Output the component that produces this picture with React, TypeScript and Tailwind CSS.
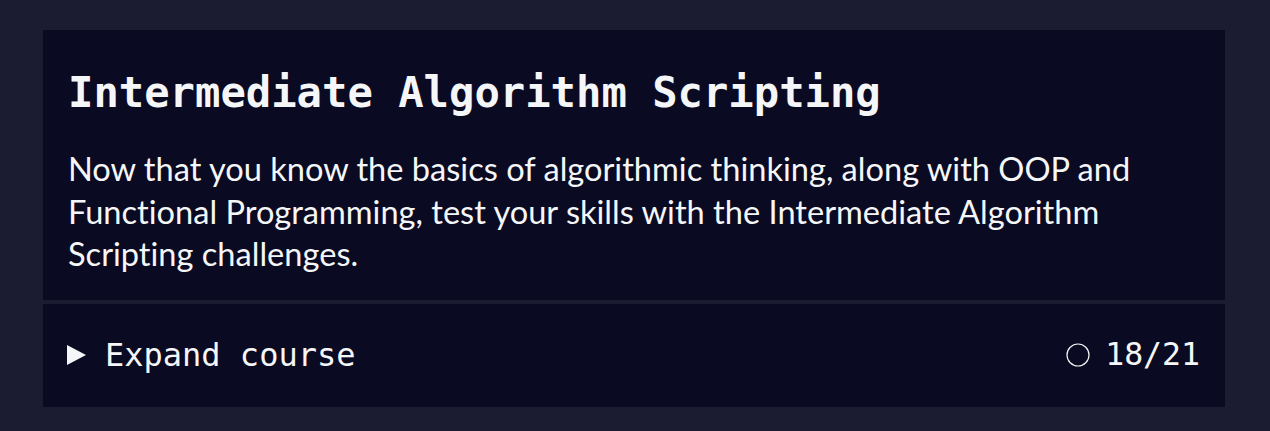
export default function App() {
  return (
    <div className="min-h-[431px] bg-[#1b1b32] pt-[30px] pb-[24px] pl-[43px] pr-[45px]">
      <div className="flex flex-col gap-[4px] bg-[#1b1b32]">
        {/* Header */}
        <div className="bg-[#0a0a23] px-[25px] pt-[38px] pb-[24px]">
          <h2
            className="text-[42.2px] leading-[50px] font-bold text-[#f5f6f7]"
            style={{ fontFamily: '"DejaVu Sans Mono", "Liberation Mono", monospace' }}
          >
            Intermediate Algorithm Scripting
          </h2>
          <p
            className="mt-[30px] text-[32.6px] leading-[42.5px] text-[#f5f6f7] [font-variant-ligatures:none]"
            style={{ fontFamily: 'Lato, "Noto Sans", sans-serif' }}
          >
            Now that you know the basics of algorithmic thinking, along with OOP and Functional
            Programming, test your skills with the Intermediate Algorithm Scripting challenges.
          </p>
        </div>

        {/* Footer */}
        <div
          className="flex h-[103px] items-center justify-between bg-[#0a0a23] pl-[24px] pr-[25px] text-[#f5f6f7]"
          style={{ fontFamily: '"DejaVu Sans Mono", "Liberation Mono", monospace' }}
        >
          <button className="flex items-center gap-[18px] text-[32px]">
            <svg width="20" height="20" viewBox="0 0 20 20" className="shrink-0">
              <polygon points="0,0 19,10 0,20" fill="#f5f6f7" />
            </svg>
            <span>Expand course</span>
          </button>
          <div className="flex items-center gap-[15px] text-[31.5px]">
            <svg width="24" height="24" viewBox="0 0 24 24" className="shrink-0">
              <circle cx="12" cy="12" r="11" fill="none" stroke="#f5f6f7" strokeWidth="1.2" />
            </svg>
            <span>18/21</span>
          </div>
        </div>
      </div>
    </div>
  );
}
